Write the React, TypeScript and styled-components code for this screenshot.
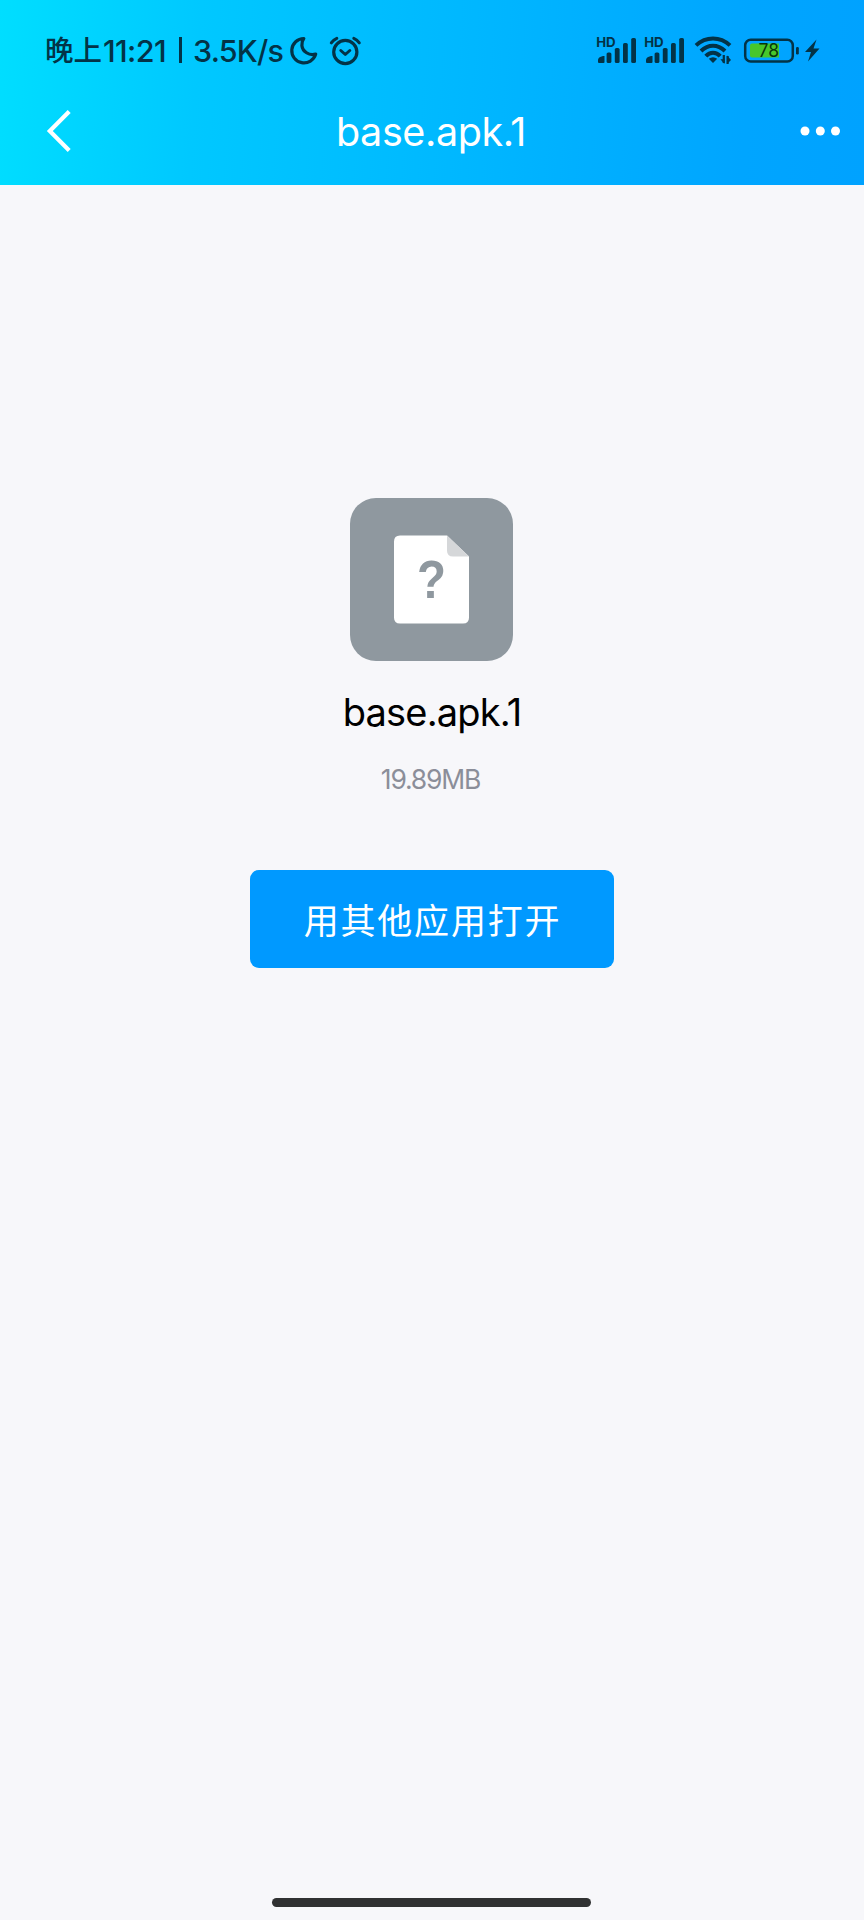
import React from 'react';
import styled, { createGlobalStyle } from 'styled-components';

const GlobalStyle = createGlobalStyle`
  body { margin: 0; background: #f7f7fa; }
  * { box-sizing: border-box; }
`;

const INK = '#033347';

const Screen = styled.div`
  width: 864px;
  height: 1920px;
  display: flex;
  flex-direction: column;
  background: #f7f7fa;
  font-family: Inter, 'Noto Sans CJK SC', sans-serif;
  overflow: hidden;
`;

const Header = styled.header`
  height: 185px;
  flex: none;
  background: linear-gradient(94deg, #00deff 0%, #00c8ff 23%, #00b5ff 58%, #00a5ff 86%, #00a2ff 100%);
`;

const StatusBar = styled.div`
  height: 80px;
  padding: 20px 44px 0 45px;
  display: flex;
  align-items: flex-start;
  justify-content: space-between;
  color: ${INK};
`;

const StatusGroup = styled.div`
  height: 60px;
  display: flex;
  align-items: center;
`;

const StatusText = styled.span<{ $width: number; $spacing?: number; $size?: number }>`
  width: ${(p) => p.$width}px;
  padding-top: 2px;
  font-size: ${(p) => p.$size ?? 30.5}px;
  letter-spacing: ${(p) => p.$spacing ?? 0}px;
  line-height: 60px;
  font-weight: 450;
  white-space: nowrap;
`;

const Divider = styled.i`
  width: 3px;
  height: 26px;
  margin-right: 11px;
  background: ${INK};
`;

const Glyph = styled.svg<{ $gap?: number }>`
  display: block;
  flex: none;
  margin-left: ${(p) => p.$gap ?? 0}px;
  overflow: visible;
`;

const NavBar = styled.nav`
  height: 105px;
  padding: 0 24px 4px 45px;
  display: grid;
  grid-template-columns: 40px 1fr 40px;
  align-items: center;
`;

const Title = styled.h1`
  margin: 0;
  padding: 2px 23px 0 0;
  text-align: center;
  color: #fff;
  font-size: 39.5px;
  line-height: 56px;
  font-weight: 400;
  letter-spacing: -0.4px;
`;

const Content = styled.main`
  flex: 1;
  display: flex;
  flex-direction: column;
  align-items: center;
  padding-top: 313px;
`;

const FileTile = styled.div`
  width: 163px;
  height: 163px;
  margin-right: 1px;
  border-radius: 26px;
  background: #8f989f;
`;

const FileName = styled.div`
  margin-top: 23px;
  height: 56px;
  line-height: 56px;
  font-size: 38px;
  letter-spacing: -0.8px;
  color: #000;
`;

const FileSize = styled.div`
  margin-top: 19px;
  padding-right: 3px;
  height: 40px;
  line-height: 40px;
  font-size: 26.5px;
  letter-spacing: -1.2px;
  color: #8b8e99;
`;

const OpenButton = styled.button`
  width: 364px;
  height: 98px;
  margin-top: 71px;
  padding: 0 0 2px 1px;
  border: 0;
  border-radius: 9px;
  background: #0099ff;
  color: #fff;
  font-family: 'Noto Sans CJK SC', sans-serif;
  font-size: 35px;
  font-weight: 400;
  letter-spacing: 1.8px;
`;

const HomeIndicator = styled.div`
  width: 319px;
  height: 9px;
  flex: none;
  align-self: center;
  margin: 0 1px 13px 0;
  border-radius: 5px;
  background: #303132;
`;

const Signal = ({ gap }: { gap: number }) => (
  <Glyph $gap={gap} width="39" height="26" viewBox="0 0 39 26" fill={INK}>
    <text x="-0.8" y="9.8" fontFamily="Inter, sans-serif" fontSize="13" fontWeight="700" textLength="19.5" lengthAdjust="spacingAndGlyphs">HD</text>
    <path d="M1 25v-2q0-3 5-4h1.5v6q0 1-1 1H2q-1 0-1-1z" />
    <rect x="9.6" y="15.5" width="4.8" height="10.5" rx="1.6" />
    <rect x="17.8" y="11" width="4.8" height="15" rx="1.6" />
    <rect x="26" y="6" width="4.8" height="20" rx="1.6" />
    <rect x="34.2" y="1" width="4.8" height="25" rx="1.6" />
  </Glyph>
);

const Moon = () => (
  <Glyph width="27" height="27" viewBox="0 0 27 27" fill="none" stroke={INK} strokeWidth="3.2" strokeLinejoin="round">
    <path d="M13.8 1.5A12.2 12.2 0 1 0 25.7 17.1C19 19 12.5 14.5 11.9 8.5 11.7 5.8 12.5 3.2 13.8 1.5Z" />
  </Glyph>
);

const Alarm = () => (
  <Glyph $gap={13} width="32" height="29" viewBox="0 0 32 29" fill="none" stroke={INK} strokeWidth="3.2" strokeLinecap="round" strokeLinejoin="round">
    <circle cx="15.3" cy="16" r="11.6" />
    <path d="M10.8 14.5l4.5 4 4.5-4M1.3 6.8Q3.3 3.8 6.8 2.3M29.3 6.8Q27.3 3.8 23.8 2.3" strokeWidth="3" />
  </Glyph>
);

const Wifi = () => (
  <Glyph $gap={10} width="38" height="28" viewBox="0 0 38 28" fill="none" stroke={INK} strokeWidth="4">
    <path d="M2 9.4Q9.5 2.5 19 2.5T36 9.4M7 15Q12.5 9.7 19 9.7T31 15M11.8 20.2Q15 16.7 19 16.7T26.2 20.2" />
    <path d="M14.8 22.8q4.2-3 8.4 0L19 27z" fill={INK} stroke="none" />
    <path d="M29.8 19v8M33.6 28v-8" strokeWidth="2.2" />
    <path d="M26.4 23.3h4V28zM33 28v-8.5l4 4.5z" fill={INK} stroke="none" />
  </Glyph>
);

const Battery = () => (
  <Glyph $gap={12} width="56" height="25" viewBox="0 0 56 25">
    <rect x="1.2" y="1.7" width="47.6" height="21.8" rx="5.5" fill="none" stroke={INK} strokeWidth="2.5" />
    <path d="M8 5.5h27v14H8q-2 0-2-2v-10q0-2 2-2z" fill="#47c72b" />
    <text x="14.6" y="19.4" fontFamily="Inter, sans-serif" fontSize="18.5" textLength="20.5" lengthAdjust="spacingAndGlyphs" fill="#06360c">78</text>
    <rect x="52" y="9" width="2.8" height="7.5" rx="1.2" fill={INK} />
  </Glyph>
);

const Bolt = () => (
  <Glyph $gap={5} width="15" height="23" viewBox="0 0 15 23" fill={INK}>
    <path d="M11.5 0.5L0 13H6L3 22.5L14.5 9.5H8.5z" />
  </Glyph>
);

const Back = () => (
  <Glyph width="26" height="44" viewBox="0 0 26 44" fill="none" stroke="#fff" strokeWidth="4.2">
    <path d="M24.2 2.5L4.8 22L24.2 41.5" />
  </Glyph>
);

const More = () => (
  <Glyph width="40" height="10" viewBox="0 0 40 10" fill="#fff">
    <circle cx="5" cy="5" r="4.5" />
    <circle cx="20.3" cy="5" r="4.5" />
    <circle cx="35.5" cy="5" r="4.5" />
  </Glyph>
);

const UnknownFile = () => (
  <Glyph width="163" height="163" viewBox="0 0 163 163">
    <path d="M50 37.5H97L119 58.5V119.5Q119 125.5 113 125.5H50Q44 125.5 44 119.5V43.5Q44 37.5 50 37.5Z" fill="#fff" />
    <path d="M97 37.5L119 58.5H103Q97 58.5 97 52.5Z" fill="#d5d7d9" />
    <text x="67" y="100.3" fontFamily="'Liberation Sans', sans-serif" fontSize="53" fontWeight="700" textLength="29" lengthAdjust="spacingAndGlyphs" fill="#8f989f">?</text>
  </Glyph>
);

export default function App() {
  return (
    <Screen>
      <GlobalStyle />
      <Header>
        <StatusBar>
          <StatusGroup>
            <StatusText $width={58} $size={28.5}>晚上</StatusText>
            <StatusText $width={76} $spacing={-0.6}>11:21</StatusText>
            <Divider />
            <StatusText $width={97} $spacing={-0.8}>3.5K/s</StatusText>
            <Moon />
            <Alarm />
          </StatusGroup>
          <StatusGroup>
            <Signal gap={0} />
            <Signal gap={9} />
            <Wifi />
            <Battery />
            <Bolt />
          </StatusGroup>
        </StatusBar>
        <NavBar>
          <Back />
          <Title>base.apk.1</Title>
          <More />
        </NavBar>
      </Header>
      <Content>
        <FileTile><UnknownFile /></FileTile>
        <FileName>base.apk.1</FileName>
        <FileSize>19.89MB</FileSize>
        <OpenButton>用其他应用打开</OpenButton>
      </Content>
      <HomeIndicator />
    </Screen>
  );
}
